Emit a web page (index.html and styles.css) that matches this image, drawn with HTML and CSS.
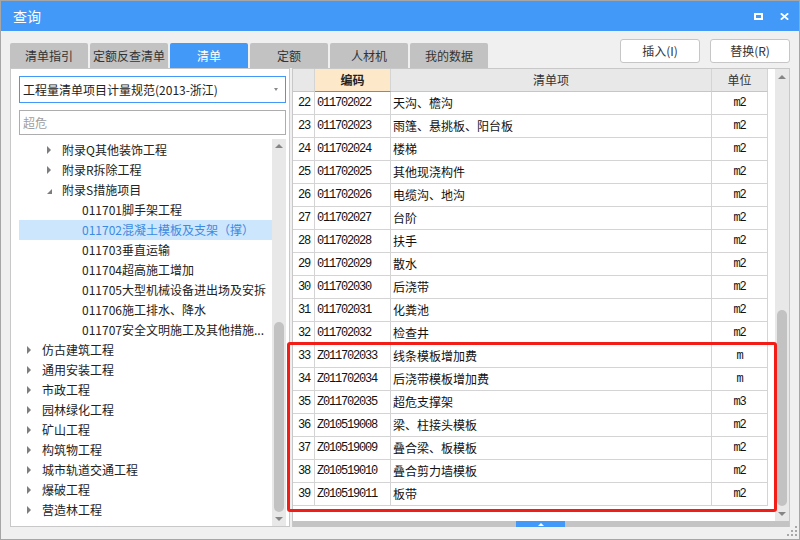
FILE: index.html
```html
<!DOCTYPE html>
<html lang="zh">
<head>
<meta charset="utf-8">
<title>查询</title>
<link rel="stylesheet" href="styles.css">
</head>
<body>
<div class="window">
  <div class="titlebar">
    <span class="title">查询</span>
    <div class="wctl">
      <svg width="9" height="7" viewBox="0 0 9 7"><path d="M0 0H9V7H0Z M2 2V5H7V2Z" fill="#fff" fill-rule="evenodd"/></svg>
      <svg width="9" height="7" viewBox="0 0 9 7"><path d="M0.8 0.3L8.2 6.7M8.2 0.3L0.8 6.7" stroke="#fff" stroke-width="1.8"/></svg>
    </div>
  </div>
  <div class="toolbar">
    <div class="tabs">
      <div class="tab">清单指引</div>
      <div class="tab">定额反查清单</div>
      <div class="tab active">清单</div>
      <div class="tab">定额</div>
      <div class="tab">人材机</div>
      <div class="tab">我的数据</div>
    </div>
    <div class="buttons">
      <button class="btn">插入(I)</button>
      <button class="btn">替换(R)</button>
    </div>
  </div>
  <div class="content">
    <div class="left">
      <div class="select"><span>工程量清单项目计量规范(2013-浙江)</span><i class="caret"></i></div>
      <div class="search">超危</div>
      <div class="treewrap">
        <div class="tree">
          <div class="node l2"><i class="arr"></i>附录Q其他装饰工程</div>
          <div class="node l2"><i class="arr"></i>附录R拆除工程</div>
          <div class="node l2"><i class="arr open"></i>附录S措施项目</div>
          <div class="node l3">011701脚手架工程</div>
          <div class="node l3 selected">011702混凝土模板及支架（撑）</div>
          <div class="node l3">011703垂直运输</div>
          <div class="node l3">011704超高施工增加</div>
          <div class="node l3">011705大型机械设备进出场及安拆</div>
          <div class="node l3">011706施工排水、降水</div>
          <div class="node l3">011707安全文明施工及其他措施...</div>
          <div class="node l1"><i class="arr"></i>仿古建筑工程</div>
          <div class="node l1"><i class="arr"></i>通用安装工程</div>
          <div class="node l1"><i class="arr"></i>市政工程</div>
          <div class="node l1"><i class="arr"></i>园林绿化工程</div>
          <div class="node l1"><i class="arr"></i>矿山工程</div>
          <div class="node l1"><i class="arr"></i>构筑物工程</div>
          <div class="node l1"><i class="arr"></i>城市轨道交通工程</div>
          <div class="node l1"><i class="arr"></i>爆破工程</div>
          <div class="node l1"><i class="arr"></i>营造林工程</div>
        </div>
        <div class="vs tree-vs">
          <div class="up"></div>
          <div class="sp"></div>
          <div class="thumb"></div>
          <div class="down"></div>
        </div>
      </div>
    </div>
    <div class="right">
      <div class="gridarea">
        <div class="table">
          <div class="row hd"><div></div><div class="sel">编码</div><div>清单项</div><div>单位</div></div>
          <div class="row"><div class="num">22</div><div class="code">011702022</div><div class="name">天沟、檐沟</div><div class="unit">m2</div></div>
          <div class="row"><div class="num">23</div><div class="code">011702023</div><div class="name">雨篷、悬挑板、阳台板</div><div class="unit">m2</div></div>
          <div class="row"><div class="num">24</div><div class="code">011702024</div><div class="name">楼梯</div><div class="unit">m2</div></div>
          <div class="row"><div class="num">25</div><div class="code">011702025</div><div class="name">其他现浇构件</div><div class="unit">m2</div></div>
          <div class="row"><div class="num">26</div><div class="code">011702026</div><div class="name">电缆沟、地沟</div><div class="unit">m2</div></div>
          <div class="row"><div class="num">27</div><div class="code">011702027</div><div class="name">台阶</div><div class="unit">m2</div></div>
          <div class="row"><div class="num">28</div><div class="code">011702028</div><div class="name">扶手</div><div class="unit">m2</div></div>
          <div class="row"><div class="num">29</div><div class="code">011702029</div><div class="name">散水</div><div class="unit">m2</div></div>
          <div class="row"><div class="num">30</div><div class="code">011702030</div><div class="name">后浇带</div><div class="unit">m2</div></div>
          <div class="row"><div class="num">31</div><div class="code">011702031</div><div class="name">化粪池</div><div class="unit">m2</div></div>
          <div class="row"><div class="num">32</div><div class="code">011702032</div><div class="name">检查井</div><div class="unit">m2</div></div>
          <div class="row"><div class="num">33</div><div class="code">Z011702033</div><div class="name">线条模板增加费</div><div class="unit">m</div></div>
          <div class="row"><div class="num">34</div><div class="code">Z011702034</div><div class="name">后浇带模板增加费</div><div class="unit">m</div></div>
          <div class="row"><div class="num">35</div><div class="code">Z011702035</div><div class="name">超危支撑架</div><div class="unit">m3</div></div>
          <div class="row"><div class="num">36</div><div class="code">Z010519008</div><div class="name">梁、柱接头模板</div><div class="unit">m2</div></div>
          <div class="row"><div class="num">37</div><div class="code">Z010519009</div><div class="name">叠合梁、板模板</div><div class="unit">m2</div></div>
          <div class="row"><div class="num">38</div><div class="code">Z010519010</div><div class="name">叠合剪力墙模板</div><div class="unit">m2</div></div>
          <div class="row"><div class="num">39</div><div class="code">Z010519011</div><div class="name">板带</div><div class="unit">m2</div></div>
        </div>
        <div class="gap"></div>
        <div class="vs grid-vs">
          <div class="up"></div>
          <div class="sp"></div>
          <div class="thumb"></div>
          <div class="down"></div>
        </div>
      </div>
      <div class="hscroll"><div class="hthumb"><i class="hup"></i></div></div>
    </div>
  </div>
  <div class="highlight"></div>
  <svg class="grip" width="10" height="10" viewBox="0 0 10 10">
    <rect x="8" y="0" width="2" height="2" fill="#a8a8a8"/>
    <rect x="4" y="4" width="2" height="2" fill="#a8a8a8"/>
    <rect x="8" y="4" width="2" height="2" fill="#a8a8a8"/>
    <rect x="0" y="8" width="2" height="2" fill="#a8a8a8"/>
    <rect x="4" y="8" width="2" height="2" fill="#a8a8a8"/>
    <rect x="8" y="8" width="2" height="2" fill="#a8a8a8"/>
  </svg>
</div>
</body>
</html>
```

FILE: styles.css
```css
* { box-sizing: border-box; }
html, body { margin: 0; padding: 0; }
body {
  width: 800px;
  height: 540px;
  overflow: hidden;
  font-family: "Noto Sans CJK SC", "Noto Sans", sans-serif;
  font-size: 12px;
  color: #333;
  background: #f0f0f0;
}
.window {
  position: relative;
  width: 800px;
  height: 540px;
  border: 1px solid #a6a6a6;
  background: #f0f0f0;
  display: flex;
  flex-direction: column;
}
.titlebar {
  height: 30px;
  flex: none;
  background: #4399f8;
  color: #fff;
  display: flex;
  align-items: center;
  justify-content: space-between;
  padding: 0 10px 0 12px;
}
.title { font-size: 14px; line-height: 30px; }
.wctl { display: flex; align-items: center; gap: 17px; margin-top: 1px; }
.wctl svg { display: block; }

.toolbar {
  height: 37px;
  flex: none;
  display: flex;
  justify-content: space-between;
  align-items: flex-end;
  padding: 0 9px 0 9px;
}
.tabs { display: flex; gap: 2px; }
.tab {
  width: 78px;
  height: 25px;
  background: #c2c2c2;
  border-radius: 2px 2px 0 0;
  text-align: center;
  line-height: 25px;
  color: #333;
}
.tab.active { background: #4399f8; color: #fff; }
.buttons { display: flex; gap: 10px; margin-bottom: 5px; }
.btn {
  width: 80px;
  height: 24px;
  padding: 0;
  border: 1px solid #c6c6c6;
  border-radius: 3px;
  background: #fff;
  font-family: "Noto Sans CJK SC", sans-serif;
  font-size: 12px;
  line-height: 22px;
  color: #333;
}

.content {
  height: 459px;
  flex: none;
  display: flex;
  gap: 2px;
  padding: 0 9px;
}
.left {
  width: 280px;
  flex: none;
  border: 1px solid #c8c8c8;
  background: #fff;
  padding: 7px 0 0 8px;
  display: flex;
  flex-direction: column;
}
.select {
  width: 267px;
  height: 27px;
  flex: none;
  border: 1px solid #4399f8;
  display: flex;
  align-items: center;
  justify-content: space-between;
  padding: 0 7px 0 3px;
  line-height: 25px;
  color: #222;
}
.caret {
  width: 0; height: 0;
  border-left: 2.5px solid transparent;
  border-right: 2.5px solid transparent;
  border-top: 3px solid #8a8a8a;
}
.search {
  width: 267px;
  height: 25px;
  flex: none;
  margin-top: 7px;
  border: 1px solid #adadad;
  padding-left: 3px;
  line-height: 23px;
  color: #a0a0a0;
}
.treewrap {
  flex: 1;
  min-height: 0;
  display: flex;
  margin-top: 4px;
}
.tree { width: 253px; flex: none; padding-top: 1px; overflow: hidden; }
.node {
  height: 20px;
  line-height: 20px;
  display: flex;
  align-items: center;
  white-space: nowrap;
  color: #222;
}
.l1 { padding-left: 8px; }
.l2 { padding-left: 28px; }
.l3 { padding-left: 63px; }
.node.selected { background: #cce6fd; color: #3d8ae0; }
.arr { width: 15px; flex: none; display: flex; align-items: center; }
.arr::before {
  content: "";
  width: 0; height: 0;
  border-top: 4px solid transparent;
  border-bottom: 4px solid transparent;
  border-left: 4px solid #7d7d7d;
}
.arr.open::before {
  border-top: 0;
  border-left: 5px solid transparent;
  border-bottom: 5px solid #7d7d7d;
  margin-top: 2px;
}

.vs {
  width: 14px;
  flex: none;
  background: #e8e8e8;
  display: flex;
  flex-direction: column;
  align-items: center;
}
.vs .up, .vs .down { display: flex; align-items: center; justify-content: center; width: 100%; }
.vs .up::before {
  content: "";
  width: 0; height: 0;
  border-left: 4px solid transparent;
  border-right: 4px solid transparent;
  border-bottom: 4px solid #858585;
}
.vs .down::before {
  content: "";
  width: 0; height: 0;
  border-left: 4px solid transparent;
  border-right: 4px solid transparent;
  border-top: 4px solid #858585;
}
.vs .sp { flex: 1; }
.vs .thumb { width: 10px; background: #c2c2c2; border-radius: 5px; }
.tree-vs .up { height: 14px; }
.tree-vs .down { height: 14px; }
.tree-vs .thumb { height: 190px; }
.grid-vs .up { height: 16px; }
.grid-vs .down { height: 15px; }
.grid-vs .thumb { height: 196px; }

.right {
  flex: 1;
  min-width: 0;
  border: 1px solid #c8c8c8;
  border-bottom: 0;
  background: #fff;
  display: flex;
  flex-direction: column;
}
.gridarea { flex: 1; min-height: 0; display: flex; }
.table { width: 475px; flex: none; }
.gap { flex: 1; }
.row {
  display: grid;
  grid-template-columns: 22px 76px 321px 56px;
  height: 23px;
}
.row > div {
  height: 23px;
  border-right: 1px solid #d4d4d4;
  border-bottom: 1px solid #d4d4d4;
  line-height: 22px;
  white-space: nowrap;
  overflow: hidden;
  color: #111;
}
.hd > div {
  background: #e8e8e8;
  border-bottom-color: #c6c6c6;
  text-align: center;
  color: #333;
}
.hd > div.sel {
  background: #fde8c9;
  border-bottom-color: #4399f8;
  font-weight: bold;
  color: #222;
}
.num, .code, .unit {
  font-family: "Liberation Mono", "DejaVu Sans Mono", monospace;
  font-size: 12px;
  letter-spacing: -1.2px;
  color: #000;
}
.num { text-align: center; padding-left: 1px; }
.code { padding-left: 2px; }
.name { padding-left: 2px; }
.unit { text-align: center; }

.hscroll {
  height: 6px;
  flex: none;
  background: #c4c4c4;
  padding-left: 223px;
}
.hthumb {
  width: 49px;
  height: 6px;
  background: #4399f8;
  display: flex;
  align-items: center;
  justify-content: center;
}
.hup {
  width: 0; height: 0;
  border-left: 3px solid transparent;
  border-right: 3px solid transparent;
  border-bottom: 3px solid #fff;
}

.highlight {
  position: absolute;
  left: 286px;
  top: 341px;
  width: 490px;
  height: 170px;
  border: 3px solid #f21d17;
  border-radius: 3px;
  pointer-events: none;
}
.grip { position: absolute; right: 2px; bottom: 3px; display: block; }
```
